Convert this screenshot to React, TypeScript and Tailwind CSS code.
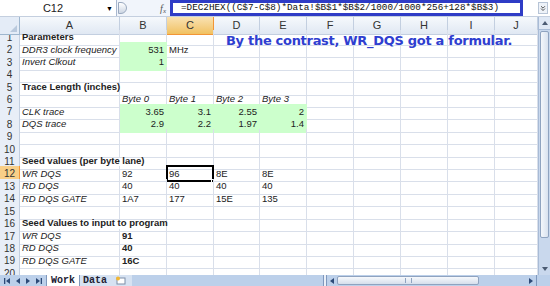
import { ChevronsDown } from 'lucide-react';

type Cell = { t?: string; b?: boolean; i?: boolean; r?: boolean; g?: boolean; span?: boolean };

const COLS = ['A', 'B', 'C', 'D', 'E', 'F', 'G', 'H', 'I', 'J'];
const GRID = 'grid grid-cols-[20px_100px_47px_47px_46px_47px_47px_47px_47px_47px_43px]';

const it = (t: string): Cell => ({ t, i: true });
const gr = (t: string): Cell => ({ t, r: true, g: true });
const tx = (t: string): Cell => ({ t });

const ROWS: Cell[][] = [
  [{ t: 'Parameters', b: true }],
  [it('DDR3 clock frequency'), gr('531'), tx('MHz')],
  [it('Invert Clkout'), gr('1')],
  [],
  [{ t: 'Trace Length (inches)', b: true }],
  [{}, it('Byte 0'), it('Byte 1'), it('Byte 2'), it('Byte 3')],
  [it('CLK trace'), gr('3.65'), gr('3.1'), gr('2.55'), gr('2')],
  [it('DQS trace'), gr('2.9'), gr('2.2'), gr('1.97'), gr('1.4')],
  [],
  [],
  [{ t: 'Seed values (per byte lane)', b: true, span: true }],
  [it('WR DQS'), tx('92'), tx('96'), tx('8E'), tx('8E')],
  [it('RD DQS'), tx('40'), tx('40'), tx('40'), tx('40')],
  [it('RD DQS GATE'), tx('1A7'), tx('177'), tx('15E'), tx('135')],
  [],
  [{ t: 'Seed Values to input to program', b: true, span: true }],
  [it('WR DQS'), { t: '91', b: true }],
  [it('RD DQS'), { t: '40', b: true }],
  [it('RD DQS GATE'), { t: '16C', b: true }],
  [],
];

function SheetRow({ n, cells }: { n: number; cells: Cell[] }) {
  const out: JSX.Element[] = [];
  let c = 0;
  while (c < COLS.length) {
    const cell = cells[c] ?? {};
    const selected = n === 12 && c === 2;
    out.push(
      <div
        key={c}
        className={`relative flex items-center whitespace-nowrap border-b border-r px-[2px] ${cell.span ? 'col-span-2' : ''} ${
          cell.g ? 'border-[#ccffcc] bg-[#ccffcc]' : 'border-[#d9dfea]'
        } ${cell.r ? 'justify-end' : ''} ${cell.b ? 'font-bold' : ''} ${cell.i ? 'italic' : ''}`}
      >
        {cell.t}
        {selected && (
          <div className="absolute -left-px -top-px bottom-[-1px] right-[-1px] border-2 border-black">
            <div className="absolute -bottom-[3px] -right-[3px] h-[4px] w-[4px] border border-white bg-black" />
          </div>
        )}
      </div>
    );
    c += cell.span ? 2 : 1;
  }
  return (
    <div className={`${GRID} h-[12.42px] shrink-0`}>
      <div
        className={`flex items-center justify-center border-b border-r text-[10px] text-[#333] ${
          n === 12 ? 'border-[#f29536] bg-[#f8cf88]' : 'border-[#c3cfe0] bg-[#e8eef7]'
        }`}
      >
        {n}
      </div>
      {out}
    </div>
  );
}

function FormulaBar() {
  return (
    <div className="flex h-[17px] shrink-0 items-stretch border-b border-[#c4cfdf] bg-white">
      <div className="relative flex w-[117px] items-center border-r border-[#a9b8cf]">
        <span className="w-[106px] text-center text-[11px] text-[#222]">C12</span>
        <span className="text-[7px] leading-none text-black">▼</span>
      </div>
      <div className="flex w-[53px] items-center bg-[#f1f5fb]">
        <div className="ml-[1px] h-[12px] w-[9px] rounded-r-full border border-[#9aa9bf] bg-gradient-to-b from-[#ffffff] to-[#cdd6e3]" />
        <span className="ml-auto mr-[4px] font-['Liberation_Serif',serif] text-[10px] italic text-[#555]">
          f<sub className="text-[7px]">x</sub>
        </span>
      </div>
      <div className="flex w-[353px] items-center border-[3px] border-[#2f3cc6] pl-[8px] font-['Liberation_Mono',monospace] text-[9.3px] text-[#111]">
        =DEC2HEX((C$7-C$8)*Data!$B$1*$B$2/1000/1000*256+128*$B$3)
      </div>
      <div className="flex flex-1 items-center justify-end pr-[2px]">
        <div className="flex h-[12px] w-[10px] items-center justify-center border border-[#b7c4d6] bg-[#eef2f8]">
          <ChevronsDown size={9} strokeWidth={2.5} className="text-[#333]" />
        </div>
      </div>
    </div>
  );
}

function VScroll() {
  return (
    <div className="flex w-[12px] shrink-0 flex-col border-l border-[#a8bbd6] bg-[#c9d8ed]">
      <div className="flex h-[13px] items-center justify-center border-b border-[#a8bbd6] bg-[#dfe8f5]">
        <svg width="6" height="4" viewBox="0 0 6 4"><path d="M0 4L3 0L6 4Z" fill="#4b5b73" /></svg>
      </div>
      <div className="mx-[1px] mt-[1px] h-[207px] rounded-[2px] border border-[#8fa3c0] bg-gradient-to-r from-[#f4f7fb] to-[#d9e2ef]" />
      <div className="flex-1" />
      <div className="flex h-[12px] items-center justify-center">
        <svg width="6" height="4" viewBox="0 0 6 4"><path d="M0 0L3 4L6 0Z" fill="#4b5b73" /></svg>
      </div>
    </div>
  );
}

function Arrow({ dir, bar }: { dir: 'l' | 'r'; bar?: boolean }) {
  return (
    <svg width="6" height="6" viewBox="0 0 6 6">
      {dir === 'l' ? <path d={bar ? 'M6 0L2 3L6 6Z' : 'M5 0L1 3L5 6Z'} fill="#2d4a78" /> : <path d={bar ? 'M0 0L4 3L0 6Z' : 'M1 0L5 3L1 6Z'} fill="#2d4a78" />}
      {bar && (dir === 'l' ? <rect x="0" y="0" width="1.3" height="6" fill="#2d4a78" /> : <rect x="4.7" y="0" width="1.3" height="6" fill="#2d4a78" />)}
    </svg>
  );
}

function TabBar() {
  return (
    <div className="flex h-[11px] shrink-0 items-stretch bg-[#bcd0ea]">
      <div className="flex w-[46px] items-center justify-around px-[2px]">
        <Arrow dir="l" bar />
        <Arrow dir="l" />
        <Arrow dir="r" />
        <Arrow dir="r" bar />
      </div>
      <div className="flex w-[34px] items-center justify-center border-x border-[#7f98bd] bg-white font-['Liberation_Mono',monospace] text-[10px] font-bold leading-none text-[#223]">
        Work
      </div>
      <div className="flex w-[30px] items-center justify-center bg-[#d6e2f2] font-['Liberation_Mono',monospace] text-[10px] font-bold leading-none text-[#223]">
        Data
      </div>
      <div className="flex w-[22px] items-center justify-center bg-[#d6e2f2]">
        <svg width="12" height="9" viewBox="0 0 12 9">
          <rect x="2" y="2" width="8" height="6" fill="#fff" stroke="#7d8ea8" />
          <circle cx="3" cy="2.5" r="2" fill="#f2b632" />
        </svg>
      </div>
      <div className="w-[191px]" />
      <div className="w-[4px] border-x border-[#7f98bd] bg-[#e9eff8]" />
      <div className="flex w-[10px] items-center justify-center">
        <Arrow dir="l" />
      </div>
      <div className="relative my-[1px] flex w-[142px] items-center justify-center rounded-[2px] border border-[#8fa3c0] bg-gradient-to-b from-[#f7f9fc] to-[#d6dfec]">
        <div className="h-[5px] w-[7px] border-x border-[#8fa3c0]" />
      </div>
      <div className="flex-1" />
      <div className="flex w-[10px] items-center justify-center">
        <Arrow dir="r" />
      </div>
      <div className="w-[14px] border-l border-[#7f98bd] bg-[#bcd0ea]" />
    </div>
  );
}

export default function App() {
  return (
    <div className="relative flex h-[286px] w-[550px] flex-col overflow-hidden bg-white font-['Liberation_Sans',Arial,sans-serif] text-[9.5px] text-[#222]">
      <FormulaBar />
      <div className="flex h-[258px] shrink-0">
        <div className="flex w-[538px] flex-col overflow-hidden">
          <div className={`${GRID} h-[13px] shrink-0 text-[11px] text-[#333]`}>
            <div className="relative border-b border-r border-[#9eb6ce] bg-[#e4ecf7]">
              <div className="absolute bottom-[2px] right-[2px] h-0 w-0 border-b-[7px] border-l-[7px] border-b-[#b9c9dd] border-l-transparent" />
            </div>
            {COLS.map((c) => (
              <div
                key={c}
                className={`flex items-center justify-center border-b border-r ${
                  c === 'C'
                    ? 'border-[#f29536] bg-gradient-to-b from-[#f9e2b2] to-[#f1c15f]'
                    : 'border-[#c3cfe0] bg-gradient-to-b from-[#f6f9fc] to-[#e0e8f3]'
                }`}
              >
                {c}
              </div>
            ))}
          </div>
          {ROWS.map((cells, i) => (
            <SheetRow key={i} n={i + 1} cells={cells} />
          ))}
        </div>
        <VScroll />
      </div>
      <TabBar />
      <div className="absolute left-[226px] top-[31px] whitespace-nowrap font-['DejaVu_Sans',sans-serif] text-[13px] font-bold tracking-[-0.3px] text-[#2f3ed0]">
        By the contrast, WR_DQS got a formular.
      </div>
    </div>
  );
}
